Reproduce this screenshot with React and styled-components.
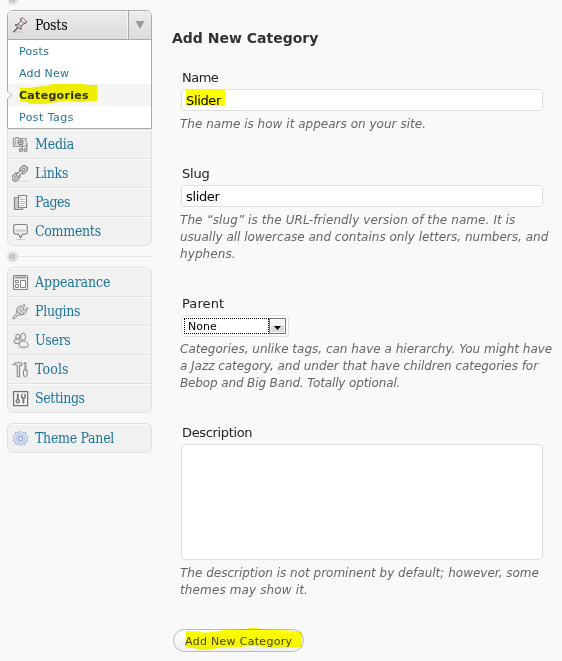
import React from "react";
import styled, { createGlobalStyle, css } from "styled-components";

const sans = '"DejaVu Sans", Verdana, sans-serif';
const serif = '"DejaVu Serif Condensed", "DejaVu Serif", Georgia, serif';

const Global = createGlobalStyle`
  *, *::before, *::after { box-sizing: border-box; }
  body { margin: 0; background: #f9f9f9; font-family: ${sans}; font-size: 13px; color: #333; overflow: hidden; }
`;

const Page = styled.div`
  display: flex;
  height: 661px;
  width: 562px;
  overflow: hidden;
`;

const Sidebar = styled.nav`
  display: flex;
  flex-direction: column;
  width: 145px;
  margin-left: 7px;
  flex: none;
`;

const Separator = styled.div`
  display: flex;
  align-items: center;
  height: 11px;
  margin: ${(p) => (p.$top ? "-6px 0 5px" : "5px 0")};
  &::after {
    content: "";
    flex: 1;
    height: 1px;
    background: #e3e3e3;
    visibility: ${(p) => (p.$top ? "hidden" : "visible")};
  }
  svg { display: block; }
`;

const OpenMenu = styled.section`
  border: 1px solid #aaa;
  border-radius: 6px 6px 0 0;
  height: 119px;
  background: #fff;
`;

const MenuHead = styled.div`
  display: flex;
  align-items: center;
  height: 29px;
  border-bottom: 1px solid #aaa;
  border-radius: 5px 5px 0 0;
  background: linear-gradient(#ececec, #dcdcdc);
  box-shadow: inset 0 1px #f5f5f5;
`;

const IconCell = styled.span`
  display: flex;
  width: 27px;
  padding-left: 4px;
  flex: none;
  svg { display: block; }
`;

const MenuText = styled.span`
  flex: 1;
  font: 14px/26px ${serif};
  letter-spacing: ${(p) => p.$ls || 0}px;
  color: ${(p) => (p.$active ? "#000" : "#21759b")};
  white-space: nowrap;
`;

const Toggle = styled.span`
  display: flex;
  align-items: center;
  justify-content: center;
  width: 23px;
  height: 28px;
  border-left: 1px solid #aaa;
  box-shadow: -1px 0 #f6f6f6;
`;

const SubItem = styled.div`
  position: relative;
  height: 22px;
  padding-left: 11px;
  font-size: 11px;
  line-height: 24px;
  letter-spacing: ${(p) => p.$ls || 0}px;
  color: #21759b;
  white-space: nowrap;
  ${(p) => p.$current && css`
    background: #f5f5f5;
    color: #333;
    font-weight: bold;
  `}
`;

const Notch = styled.svg`
  position: absolute;
  left: -1px;
  top: 5px;
`;

const Marker = styled.svg`
  position: absolute;
  left: ${(p) => p.$x}px;
  top: ${(p) => p.$y}px;
  mix-blend-mode: multiply;
  pointer-events: none;
`;

const MenuGroup = styled.section`
  border: 1px solid #e1e1e1;
  border-radius: ${(p) => (p.$attached ? "0 0 6px 6px" : "6px")};
  margin-bottom: ${(p) => p.$gap || 0}px;
  background: #f1f1f1;
  overflow: hidden;
  flex: none;
`;

const MenuItem = styled.div`
  display: flex;
  align-items: center;
  height: 29px;
  border-bottom: 1px solid #e1e1e1;
  box-shadow: inset 0 1px #fcfcfc;
  &:last-child { border-bottom: 0; height: 28px; }
`;

const Content = styled.main`
  display: flex;
  flex-direction: column;
  align-items: flex-start;
  padding: 27px 0 0 21px;
`;

const Title = styled.h3`
  margin: 0 0 19px -1px;
  font-size: 14px;
  line-height: 23px;
  height: 21px;
  color: #333;
  white-space: nowrap;
`;

const Field = styled.div`
  margin: 0 0 30px 8px;
`;

const Label = styled.label`
  display: block;
  height: 22px;
  padding-left: 1px;
  line-height: 21px;
  letter-spacing: ${(p) => p.$ls || 0}px;
  color: #222;
`;

const box = css`
  border: 1px solid #dfdfdf;
  border-radius: 4px;
  background: #fff;
`;

const TextBox = styled.div`
  ${box}
  width: 362px;
  height: 22px;
  padding-left: 4px;
  line-height: 21px;
  letter-spacing: -0.35px;
  color: #000;
`;

const Selected = styled.span`
  display: inline-block;
  height: 16px;
  width: 39px;
  line-height: 21px;
  vertical-align: top;
  background: #ff0;
`;

const TextArea = styled.div`
  ${box}
  width: 362px;
  height: 116px;
`;

const SelectBox = styled.div`
  ${box}
  display: flex;
  width: 108px;
  height: 22px;
  padding: 2px;
`;

const SelectValue = styled.span`
  width: 85px;
  height: 16px;
  padding-left: 3px;
  border: 1px dotted #000;
  font-size: 11px;
  line-height: 15px;
  color: #000;
`;

const SelectArrow = styled.span`
  display: flex;
  align-items: center;
  justify-content: center;
  width: 17px;
  height: 16px;
  border: 1px solid #777;
  background: linear-gradient(#f4f4f4 45%, #dadada 55%);
  box-shadow: inset 0 0 0 1px #fff;
  svg { margin-top: 3px; }
`;

const Help = styled.p`
  margin: ${(p) => p.$gap || 5}px 0 0 -1px;
  font-size: 12px;
  font-style: italic;
  line-height: 17px;
  color: #666;
`;

const Line = styled.span`
  display: block;
  white-space: nowrap;
  letter-spacing: ${(p) => p.$ls || 0}px;
`;

const Button = styled.button`
  position: relative;
  width: 131px;
  height: 23px;
  padding: 1px 0 0 11px;
  border: 1px solid #bbb;
  border-radius: 12px;
  background: linear-gradient(#fff, #f0f0f0);
  font: 11px/21px ${sans};
  letter-spacing: 0.3px;
  text-align: left;
  color: #464646;
  white-space: nowrap;
`;

const Icon = ({ children, size = 17 }) => (
  <svg width={size} height={size} viewBox="0 0 17 17" fill="none" stroke="#858585" strokeWidth="1.2">
    {children}
  </svg>
);

const Collapse = () => (
  <svg width="11" height="11" viewBox="0 0 11 11">
    <circle cx="5.5" cy="5.5" r="5.5" fill="#dfdfdf" />
    <path d="M5 3 2.7 5.5 5 8M8 3 5.7 5.5 8 8" fill="none" stroke="#999" />
  </svg>
);

const icons = {
  pin: (
    <Icon>
      <ellipse cx="6.5" cy="15" rx="5" ry="1" fill="#ccc" stroke="none" />
      <path d="M1.500 15 6.300 10.300" stroke="#555" />
      <path d="M3 8 5.800 7.200 9 4.200 8.600 2 10.200.9 14.700 4.800 13.700 6.300 12 6.500 9.300 9.500 9 12.600Z" fill="#dccaca" stroke="#65595a" strokeWidth="1" />
      <path d="m9 4.200 3 2.300M5.800 7.200l3.500 2.300" stroke="#8c7c7d" strokeWidth=".9" />
      <path d="m7.700 7 2-1.700M10.300 2.300l2.500 2" stroke="#fff" />
    </Icon>
  ),
  media: (
    <Icon>
      <path d="M10.500 10.500h-9v-8h2.200l.5-1h2l.5 1h7.300v3.500" fill="#e4e4e4" stroke="#999" />
      <path d="M3.500 4v5" stroke="#aaa" />
      <circle cx="8.500" cy="6.300" r="2.500" fill="#fff" />
      <circle cx="8.500" cy="6.300" r=".8" />
      <path d="M10.200 13.500V9.800M14.800 13V6.700" />
      <path d="M10.200 10h4.500" strokeWidth="1" />
      <circle cx="8.900" cy="14" r="1.500" fill="#e4e4e4" />
      <circle cx="13.500" cy="14" r="1.500" fill="#e4e4e4" />
    </Icon>
  ),
  links: (
    <Icon>
      <path d="M5 16.300h12" stroke="#ddd" />
      <g transform="translate(-.3 .4) rotate(-45 8 8)">
        <rect x="-1.500" y="4.800" width="8.500" height="6.400" rx="3.200" fill="#ddd" />
        <rect x=".9" y="7" width="3.700" height="2" rx="1" fill="#f5f5f5" strokeWidth="1" />
        <rect x="9" y="4.800" width="8.500" height="6.400" rx="3.200" fill="#ddd" />
        <rect x="11.400" y="7" width="3.700" height="2" rx="1" fill="#f5f5f5" strokeWidth="1" />
        <rect x="4.300" y="6.700" width="7.400" height="2.600" rx="1.300" fill="#eee" strokeWidth="1" />
      </g>
    </Icon>
  ),
  pages: (
    <Icon>
      <path d="M2.500 3.500h8v12h-8z" fill="#ccc" />
      <path d="M6.500 1.500h8v12h-8z" fill="#fafafa" />
      <path d="M8 3.500h2M8 5.500h5M8 7.500h5M8 9.500h5M8 11.500h4" stroke="#bbb" strokeWidth="1" />
    </Icon>
  ),
  comments: (
    <Icon>
      <path d="M4 16.500h9" stroke="#ccc" />
      <path d="M3.500 1.500h10q1.800 0 1.800 1.800v6q0 1.800-1.800 1.800h-3l-2 3.700-2-3.700h-3q-1.800 0-1.800-1.800v-6q0-1.800 1.800-1.800Z" fill="#f4f4f4" />
      <path d="M3.500 6h10v3.300h-10z" fill="#d4d4d4" stroke="none" />
    </Icon>
  ),
  appearance: (
    <Icon>
      <rect x="1.500" y="1.500" width="14" height="14" rx="1" fill="#f4f4f4" />
      <path d="M3 3.500h11" stroke="#999" strokeWidth="2" />
      <path d="M8.500 6.500h5v7h-5zM3.500 6.500h3v2h-3zM3.500 10.500h3v3h-3z" fill="#fff" strokeWidth="1" />
    </Icon>
  ),
  plugins: (
    <Icon>
      <path d="M5 16h11" stroke="#ddd" />
      <path d="M5 6.200C5.500 3.800 7.500 2.700 8.300 3.200l5.700 5.600c.2 1.600-2.600 3.300-4.800 2.800-1.200 0-2.300 1-3.300.8L2.500 15.800H1v-1.500l3.500-3.800c-.4-1.700 0-3 .5-4.300Z" fill="#ddd" strokeWidth="1" />
      <path d="m7 6 5 4.600M5.200 8.300l4 3.300M8.600 5.300l3-4 1.300.8-2.400 4.500M11.600 8l3.500-3.500.9 1.200-2.700 3.300" fill="#f5f5f5" strokeWidth="1" />
    </Icon>
  ),
  users: (
    <Icon>
      <ellipse cx="11" cy="15.500" rx="6" ry="1.200" fill="#ddd" stroke="none" />
      <ellipse cx="5.800" cy="4.800" rx="2.100" ry="2.600" fill="#e6e6e6" strokeWidth="1" />
      <ellipse cx="5.200" cy="9.300" rx="3.200" ry="2.400" fill="#e6e6e6" strokeWidth="1" />
      <ellipse cx="11.200" cy="4.700" rx="2.500" ry="3.600" fill="#eee" strokeWidth="1" />
      <path d="M7.500 13.800c-1-2.300.5-4.500 3.700-4.900 3-.2 5.500 2.500 5 4.700-.8 2.200-7.500 2.300-8.700.2Z" fill="#eee" strokeWidth="1" />
    </Icon>
  ),
  tools: (
    <Icon>
      <path d="M3 16.300h13" stroke="#ddd" />
      <path d="M.8 4C2 1.700 4.200 1.500 5.500 1.700L10 2v2.500H7.600v11H5.200v-11C4 3.800 2.500 3.200.8 4Z" fill="#e5e5e5" strokeWidth="1" />
      <path d="M13 1v7.800M11.700 2.500h3M14 4v5M11.500 9.200h3.700v5.300q-1.800 2-3.700 0Z" fill="#eee" strokeWidth="1" />
    </Icon>
  ),
  settings: (
    <Icon>
      <rect x="1.600" y="1.600" width="14" height="14" fill="#fafafa" stroke="#737373" strokeWidth="1.300" />
      <path d="M5.800 3.500v6M11.400 8v5.500" stroke="#777" strokeWidth="2" />
      <circle cx="5.800" cy="11.300" r="1.700" fill="#ddd" stroke="#707070" />
      <circle cx="11.400" cy="6.200" r="2" fill="#ddd" stroke="#707070" />
      <path d="M11.400 3.500V6" stroke="#fff" />
    </Icon>
  ),
  gear: (
    <Icon>
      <path d="m8.500.9 2 2 2.900-.7.5 2.800 2.200 1.800-1.400 1.800 1.300 2.200-2.600 1-.4 2.700-2.700-.4-1.800 2-1.800-2-2.800.4-.4-2.800-2.500-1 1.300-2.200L.9 6.800 3.100 5l.5-2.800 2.900.7Z" fill="#dce3f2" stroke="#a7b5d8" strokeWidth="1" />
      <circle cx="8.500" cy="8.500" r="4.200" stroke="#bac6e2" fill="#e8edf8" />
      <circle cx="8.500" cy="8.500" r="2.200" stroke="#91a3d0" fill="#dce4f5" />
      <circle cx="8.500" cy="8.500" r=".7" fill="#fff" stroke="none" />
    </Icon>
  ),
};

const primary = [
  ["media", "Media", -0.2],
  ["links", "Links", -0.3],
  ["pages", "Pages", -0.45],
  ["comments", "Comments", -0.3],
];

const secondary = [
  ["appearance", "Appearance", -0.1],
  ["plugins", "Plugins", -0.3],
  ["users", "Users", -0.3],
  ["tools", "Tools", 0.15],
  ["settings", "Settings", -0.4],
];

const Group = ({ items, ...rest }) => (
  <MenuGroup {...rest}>
    {items.map(([icon, text, ls]) => (
      <MenuItem key={text}>
        <IconCell>{icons[icon]}</IconCell>
        <MenuText $ls={ls}>{text}</MenuText>
      </MenuItem>
    ))}
  </MenuGroup>
);

const HelpText = ({ lines, gap }) => (
  <Help $gap={gap}>
    {lines.map(([text, ls]) => <Line key={text} $ls={ls}>{text}</Line>)}
  </Help>
);

export default function App() {
  return (
    <Page>
      <Global />
      <Sidebar>
        <Separator $top><Collapse /></Separator>
        <OpenMenu>
          <MenuHead>
            <IconCell>{icons.pin}</IconCell>
            <MenuText $active $ls={-0.2}>Posts</MenuText>
            <Toggle>
              <svg width="10" height="8"><path d="M.5 0h9L5 8Z" fill="#999" /></svg>
            </Toggle>
          </MenuHead>
          <SubItem $ls={0.3}>Posts</SubItem>
          <SubItem $ls={0.2}>Add New</SubItem>
          <SubItem $current $ls={0.3}>
            <Notch width="8" height="12"><path d="M0 2 5.500 6 0 10Z" fill="#f9f9f9" /><path d="m0 2 5 4-5 4" fill="none" stroke="#bbb" /></Notch>
            Categories
            <Marker $x={12} $y={0} width="78" height="21">
              <path d="m0 3.500 8 .6 9-1.400 10-.6L32 0h33l1 1h11.500v16H70l-11 1-15-1-14 2-7 1-14-.6-1-1.400-8-1Z" fill="#f8f800" />
            </Marker>
          </SubItem>
          <SubItem $ls={0.45}>Post Tags</SubItem>
        </OpenMenu>
        <Group items={primary} $attached />
        <Separator><Collapse /></Separator>
        <Group items={secondary} $gap={10} />
        <Group items={[["gear", "Theme Panel", -0.3]]} />
      </Sidebar>
      <Content>
        <Title>Add New Category</Title>
        <Field>
          <Label $ls={-0.5}>Name</Label>
          <TextBox><Selected>Slider</Selected></TextBox>
          <HelpText lines={[["The name is how it appears on your site.", 0.02]]} />
        </Field>
        <Field>
          <Label $ls={-0.2}>Slug</Label>
          <TextBox>slider</TextBox>
          <HelpText
            lines={[
              ["The “slug” is the URL-friendly version of the name. It is", 0.085],
              ["usually all lowercase and contains only letters, numbers, and", 0],
              ["hyphens.", 0.1],
            ]}
          />
        </Field>
        <Field>
          <Label $ls={0.1}>Parent</Label>
          <SelectBox>
            <SelectValue>None</SelectValue>
            <SelectArrow><svg width="7" height="4"><path d="M0 0h7L3.500 4Z" fill="#000" /></svg></SelectArrow>
          </SelectBox>
          <HelpText
            gap={4}
            lines={[
              ["Categories, unlike tags, can have a hierarchy. You might have", 0],
              ["a Jazz category, and under that have children categories for", -0.04],
              ["Bebop and Big Band. Totally optional.", -0.13],
            ]}
          />
        </Field>
        <Field>
          <Label $ls={-0.35}>Description</Label>
          <TextArea />
          <HelpText
            lines={[
              ["The description is not prominent by default; however, some", 0],
              ["themes may show it.", 0.13],
            ]}
          />
        </Field>
        <Button>
          Add New Category
          <Marker $x={12} $y={-2} width="118" height="23">
            <path d="m0 3 14 .4 2 1.300 8-.7L39 2l23-1 1-1h9l1 1 16 .7 17 1L116 4v15l-27 1-20-2-18 1-20 1-5 1.500-13 .5-2-1.500L0 19.500Z" fill="#ff0" />
          </Marker>
        </Button>
      </Content>
    </Page>
  );
}
